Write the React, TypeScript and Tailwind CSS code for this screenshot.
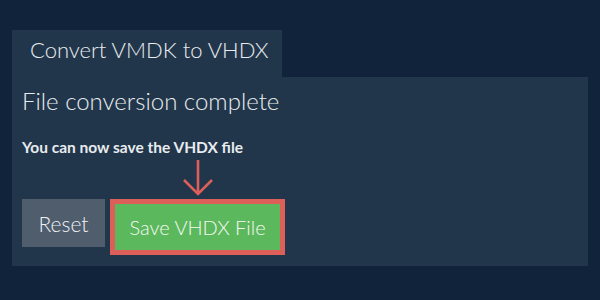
import React from 'react'

function DownArrow() {
  return (
    <svg width="32" height="38" viewBox="0 0 32 38" className="block" aria-hidden="true">
      <path d="M16 1 V35 M2 21 L16 35 L30 21" fill="none" stroke="#dd5f5a" strokeWidth="2.6" />
    </svg>
  )
}

export default function App() {
  return (
    <div
      className="h-[300px] w-[600px] bg-[#10233a] px-3 pt-[30px] font-light text-[#e8ecef]"
      style={{ fontFamily: 'Lato, "Noto Sans", sans-serif' }}
    >
      <div className="flex h-[47px] w-[270px] items-start bg-[#22364b] pl-[18px] pt-[7px] text-[22px] leading-[1.2]">
        Convert VMDK to VHDX
      </div>
      <div className="h-[189px] bg-[#22364b] px-[10px] pt-[10px]">
        <h1 className="text-[24px] leading-[1.2] font-light">File conversion complete</h1>
        <p className="mt-[22px] text-[15.5px] font-bold leading-[1.2]">You can now save the VHDX file</p>
        <div className="mt-[43px] flex items-start gap-[5px]">
          <button className="flex h-[48px] w-[83px] items-center justify-center bg-[#4f5d6d] text-[21px] text-[#eef1f4]">
            Reset
          </button>
          <div className="relative">
            <div className="absolute bottom-full left-1/2 mb-[2px] -translate-x-1/2">
              <DownArrow />
            </div>
            <button className="flex h-[56px] w-[175px] items-center justify-center border-[5px] border-[#dd5f5a] bg-[#5cb85c] text-[20px] text-[#f4f8f4]">
              Save VHDX File
            </button>
          </div>
        </div>
      </div>
    </div>
  )
}
